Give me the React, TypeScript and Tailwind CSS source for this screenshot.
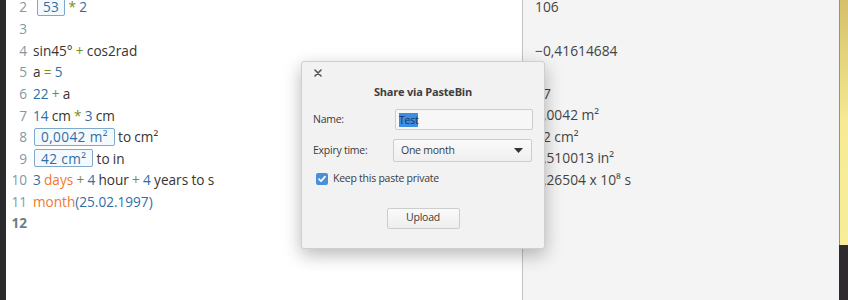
import React from 'react'

const num = 'text-[#2f6fa6]'
const op = 'text-[#7d8c14]'
const unit = 'text-[#f07a2c]'

function Box({ children, className = '' }: { children: React.ReactNode; className?: string }) {
  return (
    <span
      className={`inline-flex h-[18px] items-center rounded-[2px] border border-[#7fa9cc] bg-[#f4f9fd] leading-none [word-spacing:0px] ${num} ${className}`}
    >
      {children}
    </span>
  )
}

const lines: { n: number; content: React.ReactNode; current?: boolean; h?: string }[] = [
  {
    n: 2,
    h: 'h-[23.5px]',
    content: (
      <>
        <Box className="ml-[4px] px-[5px] tracking-[0.3px]">53</Box> <span className={op}>*</span> <span className={num}>2</span>
      </>
    ),
  },
  { n: 3, content: null },
  {
    n: 4,
    content: (
      <>
        sin45° <span className={op}>+</span> cos2rad
      </>
    ),
  },
  {
    n: 5,
    content: (
      <>
        a <span className={op}>=</span> <span className={num}>5</span>
      </>
    ),
  },
  {
    n: 6,
    content: (
      <>
        <span className={num}>22</span> <span className={op}>+</span> a
      </>
    ),
  },
  {
    n: 7,
    content: (
      <>
        <span className={num}>14</span> cm <span className={op}>*</span> <span className={num}>3</span> cm
      </>
    ),
  },
  {
    n: 8,
    content: (
      <>
        <Box className="ml-[1px] px-[6px] tracking-[0.4px]">0,0042 m²</Box> to cm²
      </>
    ),
  },
  {
    n: 9,
    content: (
      <>
        <Box className="ml-[1px] px-[6px] tracking-[0.4px]">42 cm²</Box> to in
      </>
    ),
  },
  {
    n: 10,
    content: (
      <>
        <span className={num}>3</span> <span className={unit}>days</span> <span className={op}>+</span>{' '}
        <span className={num}>4</span> hour <span className={op}>+</span> <span className={num}>4</span> years to s
      </>
    ),
  },
  {
    n: 11,
    content: (
      <>
        <span className={unit}>month</span>
        <span className={num}>(25.02.1997)</span>
      </>
    ),
  },
  { n: 12, content: null, current: true },
]

const results = ['106', '', '−0,41614684', '5', '27', '0,0042 m²', '42 cm²', '6,510013 in²', '1,26504 x 10⁸ s', '', '']

export default function App() {
  return (
    <div
      className="relative flex h-[300px] w-[848px] overflow-hidden bg-white"
      style={{ fontFamily: '"Open Sans", "Noto Sans", sans-serif' }}
    >
      <div className="w-[6px] shrink-0 bg-[#2b2a2c]" />

      {/* editor */}
      <div className="w-[516px] shrink-0 bg-white">
        <div className="-mt-[4.75px]">
          {lines.map(l => (
            <div
              key={l.n}
              className={`flex ${l.h ?? 'h-[21.56px]'} items-center text-[13.6px] text-[#353535] [word-spacing:-0.3px]`}
            >
              <span
                className={`w-[21px] shrink-0 text-right ${l.current ? 'font-bold text-[#6c7d88]' : 'text-[#8498a4]'}`}
              >
                {l.n}
              </span>
              <span className="ml-[6px] whitespace-pre">{l.content}</span>
            </div>
          ))}
        </div>
      </div>

      <div className="w-px shrink-0 bg-[#c2c2c2]" />

      {/* results */}
      <div className="w-[316px] shrink-0 bg-[#f4f4f4] pl-[12px]">
        <div className="-mt-[4.75px]">
          {results.map((r, i) => (
            <div
              key={i}
              className={`flex ${i === 0 ? 'h-[23.5px]' : 'h-[21.56px]'} items-center text-[13.8px] text-[#444]`}
            >
              {r}
            </div>
          ))}
        </div>
      </div>

      <div className="flex w-[9px] shrink-0 flex-col">
        <div className="h-[245px] border-l border-[#9a9070] bg-gradient-to-b from-[#d6c06a] via-[#f6ea94] to-[#f8ee9a]" />
        <div className="flex-1 bg-[#2e2a2e]" />
      </div>

      {/* dialog */}
      <div className="absolute left-[301px] top-[61px] h-[188px] w-[244px] rounded-[3px] border border-[#cfcfcf] bg-[#f2f2f2] text-[10.5px] tracking-[-0.25px] text-[#3b3b3b] shadow-[0_6px_18px_rgba(0,0,0,0.28)]">
        <div className="flex flex-col px-[11px]">
          <div className="flex h-[22px] items-center">
            <svg width="8" height="8" viewBox="0 0 8 8" className="ml-[1px]">
              <path d="M1 1l6 6M7 1L1 7" stroke="#555" strokeWidth="1.6" strokeLinecap="round" />
            </svg>
          </div>
          <div className="h-[16px] text-center text-[11px] font-bold leading-[16px] tracking-[-0.2px] text-[#3e3e3e]">
            Share via PasteBin
          </div>
          <div className="mt-[9px] flex items-center">
            <span className="w-[82px]">Name:</span>
            <div className="flex h-[21px] w-[138px] items-center rounded-[2px] border border-[#cdcdcd] bg-[#f7f7f7] px-[3px]">
              <span className="bg-[#3d8ee0] leading-[14px] text-[#1f3550]">Test</span>
            </div>
          </div>
          <div className="mt-[9px] flex items-center">
            <span className="w-[80px]">Expiry time:</span>
            <div className="flex h-[23px] w-[139px] items-center justify-between rounded-[2px] border border-[#cdcdcd] bg-gradient-to-b from-[#fafafa] to-[#efefef] pl-[7px] pr-[8px]">
              <span>One month</span>
              <svg width="9" height="5" viewBox="0 0 9 5">
                <path d="M0 0h9L4.5 5z" fill="#333" />
              </svg>
            </div>
          </div>
          <div className="mt-[9.5px] flex h-[14px] items-center pl-[3px]">
            <div className="flex h-[12px] w-[12px] items-center justify-center rounded-[2px] bg-[#4a90d9]">
              <svg width="10" height="10" viewBox="0 0 10 10">
                <path
                  d="M2 5.2l2 2 4-4.6"
                  stroke="#fff"
                  strokeWidth="1.7"
                  fill="none"
                  strokeLinecap="round"
                  strokeLinejoin="round"
                />
              </svg>
            </div>
            <span className="ml-[5px]">Keep this paste private</span>
          </div>
          <div className="mt-[22px] flex justify-center">
            <div className="flex h-[21px] w-[73px] items-center justify-center rounded-[2px] border border-[#cdcdcd] bg-gradient-to-b from-[#fafafa] to-[#eeeeee]">
              Upload
            </div>
          </div>
        </div>
      </div>
    </div>
  )
}
